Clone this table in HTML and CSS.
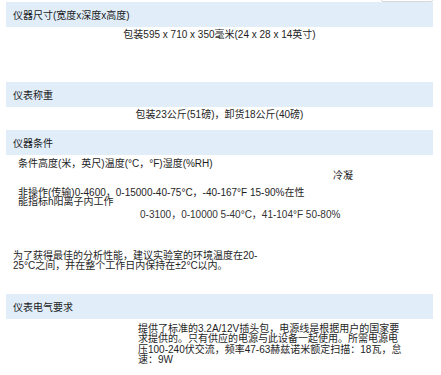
FILE: index.html
```html
<!DOCTYPE html>
<html lang="zh">
<head>
<meta charset="utf-8">
<link rel="stylesheet" href="styles.css">
</head>
<body>
<div class="page">
  <div class="corner-box"></div>
  <div class="bar">仪器尺寸(宽度x深度x高度)</div>
  <div class="center-line">包装595 x 710 x 350毫米(24 x 28 x 14英寸)</div>
  <div class="spacer-lg"></div>

  <div class="bar">仪表称重</div>
  <div class="center-line">包装23公斤(51磅)，卸货18公斤(40磅)</div>
  <div class="spacer-sm"></div>

  <div class="bar">仪器条件</div>
  <div class="cond">
    <div class="cond-head">条件高度(米，英尺)温度(°C，°F)湿度(%RH)</div>
    <div class="cond-right">冷凝</div>
    <div class="cond-row">非操作(传输)0-4600，0-15000-40-75°C，-40-167°F 15-90%在性能指标h阳离子内工作</div>
    <div class="cond-values">0-3100，0-10000 5-40°C，41-104°F 50-80%</div>
  </div>
  <p class="note">为了获得最佳的分析性能，建议实验室的环境温度在20-25°C之间，并在整个工作日内保持在±2°C以内。</p>

  <div class="bar">仪表电气要求</div>
  <p class="power">提供了标准的3.2A/12V插头包，电源线是根据用户的国家要求提供的。只有供应的电源与此设备一起使用。所需电源电压100-240伏交流，频率47-63赫兹诺米额定扫描：18瓦，怠速：9W</p>
</div>
</body>
</html>
```

FILE: styles.css
```css
html, body {
  margin: 0;
  padding: 0;
  background: #ffffff;
}

body {
  font-family: "Liberation Sans", "Noto Sans CJK SC", sans-serif;
  font-size: 10px;
  color: #1e1e1e;
}

.page {
  position: relative;
  width: 427px;
  margin-left: 6px;
  padding-top: 2px;
}

.corner-box {
  position: absolute;
  top: -20px;
  right: 0;
  width: 50px;
  height: 20px;
  border: 1px solid #d8d8d8;
  border-radius: 2px;
  background: #fff;
}

.bar {
  height: 25px;
  background: #e1eefa;
  display: flex;
  align-items: center;
  padding-left: 7px;
  color: #1a1a1a;
}

.center-line {
  text-align: center;
  line-height: 12px;
  margin-top: 2px;
}

.spacer-lg {
  height: 41px;
}

.spacer-sm {
  height: 9px;
}

.cond {
  display: flex;
  flex-direction: column;
  padding-left: 12px;
  line-height: 9px;
}

.cond-head {
  margin-top: 4px;
}

.cond-right {
  padding-left: 315px;
  margin-top: 3px;
}

.cond-row {
  width: 289px;
  margin-top: 8px;
}

.cond-values {
  padding-left: 122px;
  margin-top: 4px;
  color: #333;
}

.note {
  margin: 32px 0 24px 7px;
  width: 252px;
  line-height: 9.5px;
}

.power {
  margin: 5px 0 0 132px;
  width: 268px;
  line-height: 10.3px;
}

p {
  margin: 0;
}
```
